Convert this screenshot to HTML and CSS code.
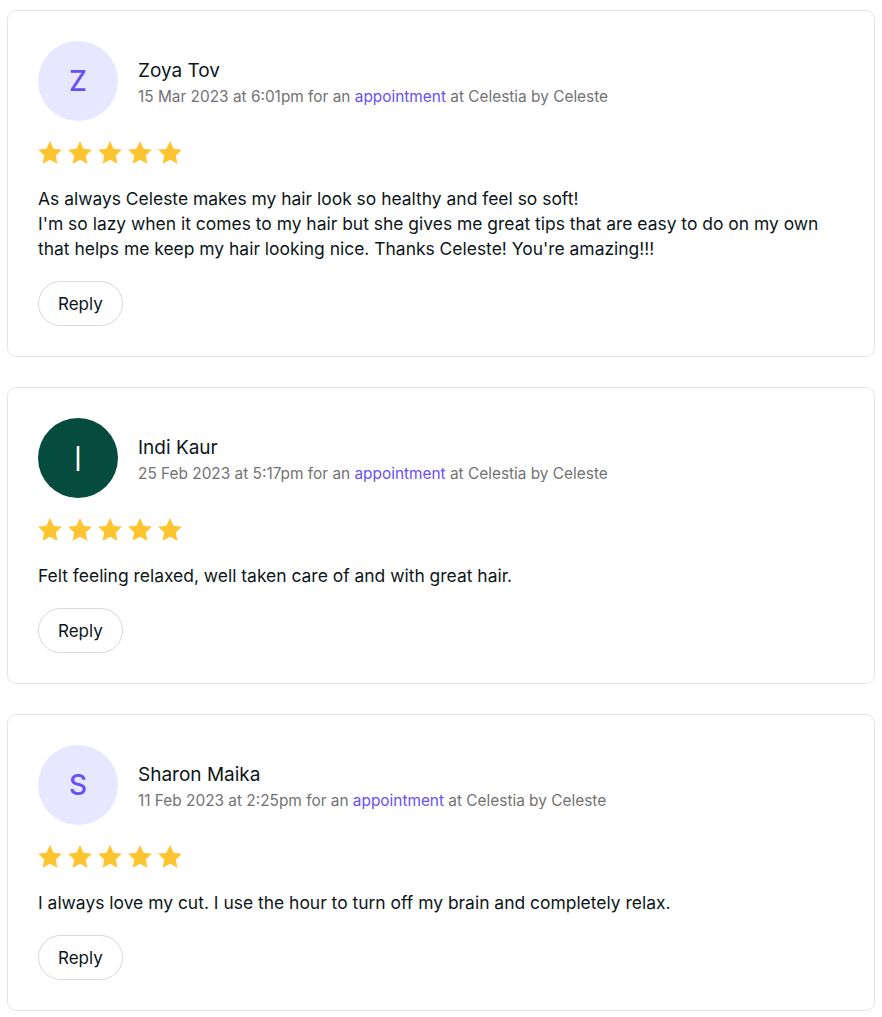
FILE: index.html
```html
<!DOCTYPE html>
<html>
<head>
<meta charset="utf-8">
<link rel="stylesheet" href="styles.css">
</head>
<body>
<div class="list">
  <div class="card">
    <div class="head">
      <div class="avatar light">Z</div>
      <div class="who">
        <div class="name">Zoya Tov</div>
        <div class="meta">15 Mar 2023 at 6:01pm for an <a href="#">appointment</a> at Celestia by Celeste</div>
      </div>
    </div>
    <div class="stars"><svg viewBox="0 0 24 24"><path d="M12 1.8l3.1 6.5 7.1.9-5.2 4.9 1.3 7.1L12 17.8l-6.3 3.4 1.3-7.1-5.2-4.9 7.1-.9z"/></svg><svg viewBox="0 0 24 24"><path d="M12 1.8l3.1 6.5 7.1.9-5.2 4.9 1.3 7.1L12 17.8l-6.3 3.4 1.3-7.1-5.2-4.9 7.1-.9z"/></svg><svg viewBox="0 0 24 24"><path d="M12 1.8l3.1 6.5 7.1.9-5.2 4.9 1.3 7.1L12 17.8l-6.3 3.4 1.3-7.1-5.2-4.9 7.1-.9z"/></svg><svg viewBox="0 0 24 24"><path d="M12 1.8l3.1 6.5 7.1.9-5.2 4.9 1.3 7.1L12 17.8l-6.3 3.4 1.3-7.1-5.2-4.9 7.1-.9z"/></svg><svg viewBox="0 0 24 24"><path d="M12 1.8l3.1 6.5 7.1.9-5.2 4.9 1.3 7.1L12 17.8l-6.3 3.4 1.3-7.1-5.2-4.9 7.1-.9z"/></svg></div>
    <p class="text">As always Celeste makes my hair look so healthy and feel so soft!<br>I'm so lazy when it comes to my hair but she gives me great tips that are easy to do on my own that helps me keep my hair looking nice. Thanks Celeste! You're amazing!!!</p>
    <button class="reply">Reply</button>
  </div>

  <div class="card">
    <div class="head">
      <div class="avatar dark">I</div>
      <div class="who">
        <div class="name">Indi Kaur</div>
        <div class="meta">25 Feb 2023 at 5:17pm for an <a href="#">appointment</a> at Celestia by Celeste</div>
      </div>
    </div>
    <div class="stars"><svg viewBox="0 0 24 24"><path d="M12 1.8l3.1 6.5 7.1.9-5.2 4.9 1.3 7.1L12 17.8l-6.3 3.4 1.3-7.1-5.2-4.9 7.1-.9z"/></svg><svg viewBox="0 0 24 24"><path d="M12 1.8l3.1 6.5 7.1.9-5.2 4.9 1.3 7.1L12 17.8l-6.3 3.4 1.3-7.1-5.2-4.9 7.1-.9z"/></svg><svg viewBox="0 0 24 24"><path d="M12 1.8l3.1 6.5 7.1.9-5.2 4.9 1.3 7.1L12 17.8l-6.3 3.4 1.3-7.1-5.2-4.9 7.1-.9z"/></svg><svg viewBox="0 0 24 24"><path d="M12 1.8l3.1 6.5 7.1.9-5.2 4.9 1.3 7.1L12 17.8l-6.3 3.4 1.3-7.1-5.2-4.9 7.1-.9z"/></svg><svg viewBox="0 0 24 24"><path d="M12 1.8l3.1 6.5 7.1.9-5.2 4.9 1.3 7.1L12 17.8l-6.3 3.4 1.3-7.1-5.2-4.9 7.1-.9z"/></svg></div>
    <p class="text">Felt feeling relaxed, well taken care of and with great hair.</p>
    <button class="reply">Reply</button>
  </div>

  <div class="card">
    <div class="head">
      <div class="avatar light">S</div>
      <div class="who">
        <div class="name">Sharon Maika</div>
        <div class="meta">11 Feb 2023 at 2:25pm for an <a href="#">appointment</a> at Celestia by Celeste</div>
      </div>
    </div>
    <div class="stars"><svg viewBox="0 0 24 24"><path d="M12 1.8l3.1 6.5 7.1.9-5.2 4.9 1.3 7.1L12 17.8l-6.3 3.4 1.3-7.1-5.2-4.9 7.1-.9z"/></svg><svg viewBox="0 0 24 24"><path d="M12 1.8l3.1 6.5 7.1.9-5.2 4.9 1.3 7.1L12 17.8l-6.3 3.4 1.3-7.1-5.2-4.9 7.1-.9z"/></svg><svg viewBox="0 0 24 24"><path d="M12 1.8l3.1 6.5 7.1.9-5.2 4.9 1.3 7.1L12 17.8l-6.3 3.4 1.3-7.1-5.2-4.9 7.1-.9z"/></svg><svg viewBox="0 0 24 24"><path d="M12 1.8l3.1 6.5 7.1.9-5.2 4.9 1.3 7.1L12 17.8l-6.3 3.4 1.3-7.1-5.2-4.9 7.1-.9z"/></svg><svg viewBox="0 0 24 24"><path d="M12 1.8l3.1 6.5 7.1.9-5.2 4.9 1.3 7.1L12 17.8l-6.3 3.4 1.3-7.1-5.2-4.9 7.1-.9z"/></svg></div>
    <p class="text">I always love my cut. I use the hour to turn off my brain and completely relax.</p>
    <button class="reply">Reply</button>
  </div>
</div>
</body>
</html>
```

FILE: styles.css
```css
* { box-sizing: border-box; }
body {
  margin: 0;
  padding: 10px 7px 7px 7px;
  background: #fff;
  font-family: Inter, "Noto Sans", sans-serif;
  color: #0d1619;
}
.list {
  display: flex;
  flex-direction: column;
  gap: 30px;
}
.card {
  border: 1px solid #e5e5e5;
  border-radius: 9px;
  padding: 30px 30px 30px 30px;
  display: flex;
  flex-direction: column;
  align-items: flex-start;
}
.head {
  display: flex;
  align-items: center;
  gap: 20px;
}
.avatar {
  width: 80px;
  height: 80px;
  border-radius: 50%;
  display: flex;
  align-items: center;
  justify-content: center;
  font-size: 28px;
  font-weight: 500;
  flex: none;
}
.avatar.light { background: #e7e7ff; color: #6950f3; }
.avatar.dark { background: #054c3e; color: #fff; font-weight: 300; font-size: 34px; }
.who { display: flex; flex-direction: column; }
.name {
  font-size: 19px;
  line-height: 26px;
  margin-top: 3px;
  color: #0d1619;
}
.meta {
  font-size: 15.4px;
  line-height: 22px;
  margin-top: 2px;
  color: #737373;
}
.meta a { color: #6950f3; text-decoration: none; }
.stars {
  display: flex;
  gap: 2px;
  margin-top: 18px;
  margin-left: -2px;
}
.stars svg {
  width: 28px;
  height: 28px;
  fill: #ffc530;
}
.text {
  margin: 19px 0 0 0;
  font-size: 17.45px;
  line-height: 25px;
  color: #0d1619;
}
.reply {
  margin-top: 20px;
  height: 45px;
  padding: 0 19px;
  border: 1px solid #d9d9d9;
  border-radius: 23px;
  background: #fff;
  font-family: inherit;
  font-size: 17px;
  color: #0d1619;
}
```
